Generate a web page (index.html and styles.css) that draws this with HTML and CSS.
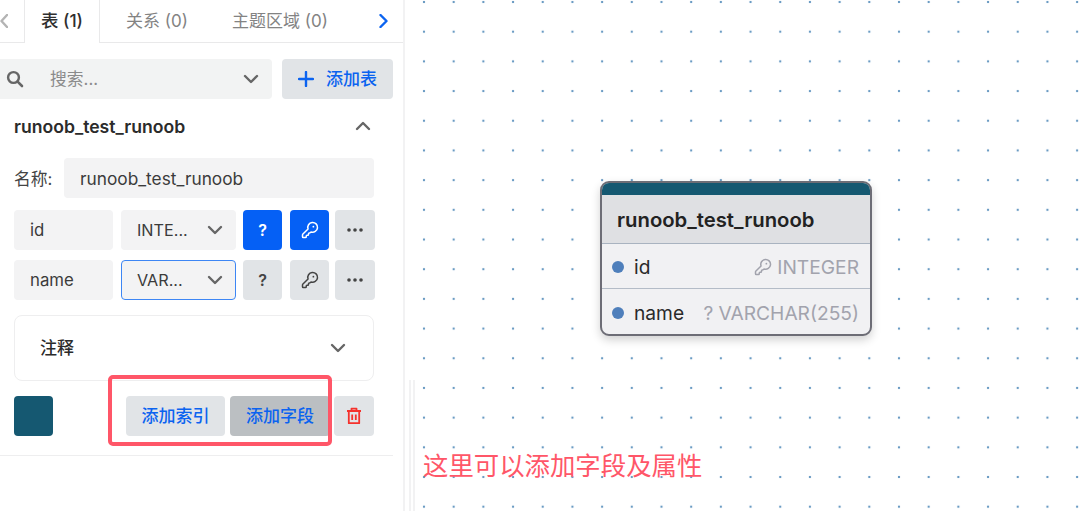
FILE: index.html
```html
<!DOCTYPE html>
<html lang="zh-CN">
<head>
    <meta charset="UTF-8">
    <title>表 (1)</title>
    <link rel="stylesheet" href="styles.css">
</head>
<body>
    <svg class="defs" width="0" height="0">
        <symbol id="key" viewBox="0 0 24 24">
            <path d="M2.586 17.414A2 2 0 0 0 2 18.828V21a1 1 0 0 0 1 1h3a1 1 0 0 0 1-1v-1a1 1 0 0 1 1-1h1a1 1 0 0 0 1-1v-1a1 1 0 0 1 1-1h.172a2 2 0 0 0 1.414-.586l.814-.814a6.5 6.5 0 1 0-4-4z" fill="none" stroke="currentColor" stroke-width="2" stroke-linejoin="round"/>
            <circle cx="16.5" cy="7.5" r="1.2" fill="currentColor"/>
        </symbol>
        <symbol id="down" viewBox="0 0 16 10">
            <path d="M2 2l6 6 6-6" fill="none" stroke="currentColor" stroke-width="2.4" stroke-linecap="round" stroke-linejoin="round"/>
        </symbol>
        <symbol id="dots" viewBox="0 0 16 4">
            <circle cx="2" cy="2" r="1.8" fill="currentColor"/>
            <circle cx="8" cy="2" r="1.8" fill="currentColor"/>
            <circle cx="14" cy="2" r="1.8" fill="currentColor"/>
        </symbol>
    </svg>

    <div class="app">
        <aside class="sidebar">
            <div class="tabs">
                <svg class="tab-arrow" width="8" height="14" viewBox="0 0 8 14"><path d="M7 1L1.5 7 7 13" fill="none" stroke="#b4b4b4" stroke-width="2.4" stroke-linecap="round" stroke-linejoin="round"/></svg>
                <div class="tab active">表 (1)</div>
                <div class="tab rel">关系 (0)</div>
                <div class="tab area">主题区域 (0)</div>
                <svg class="tab-next" width="9" height="14" viewBox="0 0 9 14"><path d="M1.5 1L7.5 7l-6 6" fill="none" stroke="#0b63f0" stroke-width="2.4" stroke-linecap="round" stroke-linejoin="round"/></svg>
            </div>

            <div class="search-row">
                <div class="search">
                    <svg class="search-icon" width="18" height="18" viewBox="0 0 18 18"><circle cx="7.5" cy="7.5" r="5.4" fill="none" stroke="#666" stroke-width="2.4"/><path d="M11.6 11.6l4.4 4.4" stroke="#666" stroke-width="2.6" stroke-linecap="round"/></svg>
                    <span class="placeholder">搜索...</span>
                    <svg class="chev" width="16" height="10"><use href="#down"/></svg>
                </div>
                <button class="btn add-table">
                    <svg width="16" height="16" viewBox="0 0 16 16"><path d="M8 1v14M1 8h14" stroke="#0b63f0" stroke-width="2.4" stroke-linecap="round"/></svg>
                    添加表
                </button>
            </div>

            <div class="table-head">
                <span>runoob_test_runoob</span>
                <svg class="chev flip" width="16" height="10"><use href="#down"/></svg>
            </div>

            <div class="name-row">
                <label>名称:</label>
                <div class="field name-input">runoob_test_runoob</div>
            </div>

            <div class="field-row">
                <div class="field col-name">id</div>
                <div class="field col-type">INTE...<svg class="chev" width="16" height="10"><use href="#down"/></svg></div>
                <div class="sq on q">?</div>
                <div class="sq on k"><svg width="18" height="18"><use href="#key"/></svg></div>
                <div class="sq more"><svg width="16" height="4"><use href="#dots"/></svg></div>
            </div>
            <div class="field-row">
                <div class="field col-name">name</div>
                <div class="field col-type focus">VAR...<svg class="chev" width="16" height="10"><use href="#down"/></svg></div>
                <div class="sq q">?</div>
                <div class="sq k"><svg width="18" height="18"><use href="#key"/></svg></div>
                <div class="sq more"><svg width="16" height="4"><use href="#dots"/></svg></div>
            </div>

            <div class="comment">
                <span>注释</span>
                <svg class="chev" width="16" height="10"><use href="#down"/></svg>
            </div>

            <div class="actions">
                <div class="swatch"></div>
                <button class="btn act">添加索引</button>
                <button class="btn act dark">添加字段</button>
                <button class="btn trash">
                    <svg width="16" height="18" viewBox="0 0 16 18"><path d="M1 4h14M5.5 4V1.6h5V4M2.8 4v12.2h10.4V4M6.2 7.4v5.6M9.8 7.4v5.6" fill="none" stroke="#f5322d" stroke-width="1.8" stroke-linejoin="round"/></svg>
                </button>
            </div>
            <div class="divider"></div>
            <div class="highlight"></div>
        </aside>

        <main class="canvas">
            <div class="handle"></div>
            <div class="node">
                <div class="node-bar"></div>
                <div class="node-title">runoob_test_runoob</div>
                <div class="node-row">
                    <i class="dot"></i><span class="node-col">id</span>
                    <span class="node-type"><svg width="18" height="18"><use href="#key"/></svg>INTEGER</span>
                </div>
                <div class="node-row">
                    <i class="dot"></i><span class="node-col">name</span>
                    <span class="node-type">? VARCHAR(255)</span>
                </div>
            </div>
            <div class="note">这里可以添加字段及属性</div>
        </main>
    </div>
</body>
</html>
```

FILE: styles.css
```css
* {
    margin: 0;
    padding: 0;
    box-sizing: border-box;
}

body {
    font-family: Inter, 'Noto Sans CJK SC', sans-serif;
    color: #333;
    background: #fff;
    overflow: hidden;
}

.defs {
    position: absolute;
}

.app {
    display: flex;
    width: 1080px;
    height: 511px;
}

/* Sidebar */
.sidebar {
    position: relative;
    width: 405px;
    flex: none;
    border-right: 2px solid #f2f2f3;
    overflow: hidden;
}

.tabs {
    display: flex;
    align-items: center;
    height: 43px;
    border-bottom: 1px solid #e9e9ea;
    font-size: 17px;
    color: #838383;
}

.tab-arrow {
    flex: none;
    margin-right: 16px;
}

.tab {
    flex: none;
    line-height: 42px;
}

.tab.active {
    width: 76px;
    height: 43px;
    text-align: center;
    color: #2f2f2f;
    font-size: 17.4px;
    font-weight: 500;
    background: #fff;
    border-left: 1px solid #e9e9ea;
    border-right: 1px solid #e9e9ea;
}

.rel {
    margin-left: 26px;
}

.area {
    margin-left: 44px;
}

.tab-next {
    flex: none;
    margin-left: 51px;
}

.search-row {
    display: flex;
    gap: 10px;
    margin-top: 16px;
}

.search {
    display: flex;
    align-items: center;
    width: 272px;
    height: 40px;
    padding-left: 6px;
    background: #f2f3f3;
    border-radius: 0 4px 4px 0;
    font-size: 16.8px;
}

.placeholder {
    margin-left: 26px;
    line-height: 1;
    color: #8b8b8b;
}

.chev {
    color: #666;
    flex: none;
}

.search .chev {
    margin-left: auto;
    margin-right: 13px;
}

.btn {
    border: none;
    font-family: inherit;
    font-size: 17px;
    font-weight: 500;
    line-height: 1;
    color: #0b63f0;
    background: #e1e4e7;
    border-radius: 4px;
    height: 40px;
}

.add-table {
    display: flex;
    align-items: center;
    justify-content: center;
    gap: 12px;
    width: 111px;
}

.table-head {
    display: flex;
    justify-content: space-between;
    align-items: center;
    margin-top: 16px;
    padding: 0 32px 0 14px;
    height: 22px;
    font-size: 17.6px;
    font-weight: 600;
    color: #2b2b2b;
}

.flip {
    transform: scaleY(-1);
}

.name-row {
    display: flex;
    align-items: center;
    margin: 21px 0 12px 14px;
    font-size: 16.8px;
    color: #444;
}

.name-row label {
    width: 50px;
}

.field {
    display: flex;
    align-items: center;
    height: 40px;
    padding-left: 16px;
    background: #f3f3f4;
    border-radius: 4px;
    font-size: 16.8px;
    color: #3b3b3b;
}

.name-input {
    width: 310px;
    font-size: 17.3px;
}

.field-row {
    display: flex;
    margin: 0 0 10px 14px;
}

.col-name {
    width: 99px;
    margin-right: 8px;
}

.col-type {
    justify-content: space-between;
    width: 115px;
    padding-right: 13px;
    margin-right: 7px;
    font-size: 16.2px;
}

.col-type.focus {
    border: 1px solid #3d86f4;
    padding-left: 15px;
    padding-right: 12px;
}

.sq {
    display: flex;
    align-items: center;
    justify-content: center;
    width: 39px;
    height: 40px;
    background: #e1e4e7;
    border-radius: 4px;
    color: #444;
    font-size: 16px;
    font-weight: 600;
}

.sq.on {
    background: #0560f5;
    color: #fff;
}

.sq.k {
    margin: 0 6px 0 8px;
}

.sq.more {
    width: 40px;
}

.comment {
    display: flex;
    align-items: center;
    justify-content: space-between;
    width: 360px;
    height: 66px;
    margin: 15px 0 0 14px;
    padding: 0 27px 0 25px;
    border: 1px solid #eeeeef;
    border-radius: 8px;
    font-size: 17px;
    font-weight: 500;
    line-height: 1;
    color: #2b2b2b;
}

.actions {
    display: flex;
    margin: 15px 0 0 14px;
}

.swatch {
    width: 39px;
    height: 40px;
    background: #155871;
    border-radius: 4px;
    margin-right: 73px;
}

.act {
    width: 99px;
    margin-right: 5px;
}

.act.dark {
    width: 100px;
    margin-right: 4px;
    background: #bbbfc2;
}

.trash {
    display: flex;
    align-items: center;
    justify-content: center;
    width: 40px;
}

.divider {
    width: 393px;
    margin-top: 19px;
    border-top: 1px solid #eeeeef;
}

.highlight {
    position: absolute;
    left: 108px;
    top: 375px;
    width: 224px;
    height: 71px;
    border: 4px solid #ff5668;
    border-radius: 5px;
}

/* Canvas */
.canvas {
    position: relative;
    flex: 1;
    background-color: #fff;
    background-image: radial-gradient(circle, #6a9bc3 0, #6a9bc3 0.9px, transparent 1.6px);
    background-size: 29.7px 29.7px;
    background-position: 4.15px -12.85px;
}

.handle {
    position: absolute;
    left: 4px;
    top: 380px;
    bottom: 0;
    width: 6px;
    border-left: 2px solid #f2f2f3;
    border-right: 2px solid #f2f2f3;
}

.node {
    position: absolute;
    left: 195px;
    top: 181px;
    width: 272px;
    height: 155px;
    background: #f1f1f3;
    border: 2px solid #6d6d76;
    border-radius: 9px;
    overflow: hidden;
    box-shadow: 0 4px 10px rgba(0, 0, 0, 0.18);
}

.node-bar {
    height: 12px;
    background: #155871;
}

.node-title {
    height: 49px;
    padding-left: 15px;
    line-height: 49px;
    font-size: 20.3px;
    font-weight: 600;
    color: #222;
    background: #dfe0e3;
    border-bottom: 1px solid #a9b3c0;
}

.node-row {
    display: flex;
    align-items: center;
    height: 45px;
    padding: 2px 11px 0 10px;
    font-size: 19.2px;
    border-bottom: 1px solid #b4bcc7;
}

.node-row:last-child {
    border-bottom: none;
}

.dot {
    width: 12px;
    height: 12px;
    margin-right: 10px;
    border-radius: 50%;
    background: #4f7fbb;
}

.node-col {
    color: #2a2a2a;
}

.node-type {
    display: flex;
    align-items: center;
    gap: 5px;
    margin-left: auto;
    color: #a2a3ad;
}

.note {
    position: absolute;
    left: 18px;
    top: 446px;
    font-size: 25.4px;
    line-height: 40px;
    color: #ff5668;
}
```
